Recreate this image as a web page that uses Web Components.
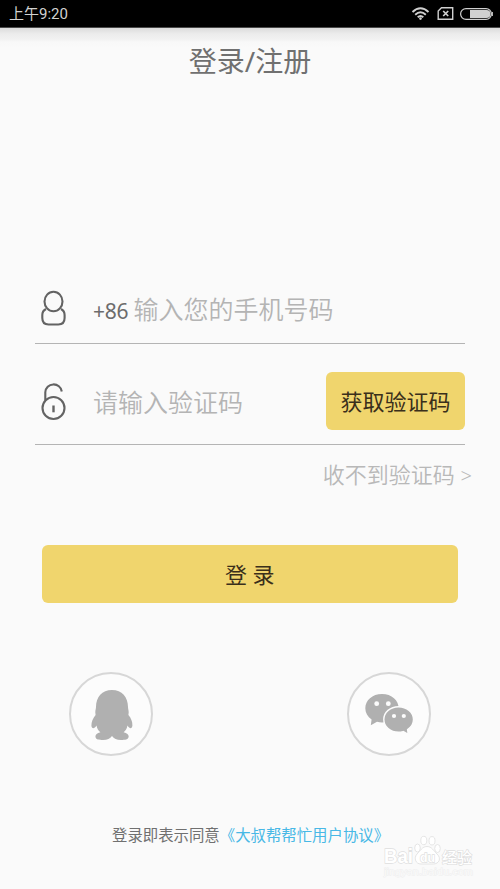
<!DOCTYPE html>
<html lang="zh-CN">
<head>
<meta charset="utf-8">
<title>登录/注册</title>
<style>
html,body{margin:0;padding:0}
body{width:500px;height:889px;overflow:hidden;background:#fafafa;font-family:"Noto Sans","Noto Sans CJK SC",sans-serif}
</style>
</head>
<body>
<login-screen></login-screen>
<script>
const define = (name, html) => customElements.define(name, class extends HTMLElement {
  constructor() {
    super();
    this.attachShadow({mode: 'open'}).innerHTML = html;
  }
});

define('status-bar', `<style>
:host{display:flex;align-items:center;height:27px;padding:0 7px 0 9px;background:#000;color:#d2d2d2;font:15px/27px Roboto,"Noto Sans CJK SC",sans-serif;border-bottom:1px solid #4a4a4a}
.time{flex:1;padding-top:1px}
svg{display:block}
</style>
<span class="time"><slot></slot></span>
<svg width="82" height="20" viewBox="411 4 82 20" fill="none" stroke="#d0d0d0">
<path d="M412.500 12Q420.500 4.500 428.500 12M415.200 14.700Q420.500 9.800 425.800 14.700M417.700 17.200Q420.500 14.700 423.300 17.200" stroke-width="1.900"/>
<circle cx="420.500" cy="18.600" r="1.300" fill="#d0d0d0" stroke="none"/>
<path d="M441.500 7.700H452.700V19.300H438.200V11Z" stroke-width="1.400"/>
<path d="M443.200 11L448.200 16M448.200 11L443.200 16" stroke-width="1.700"/>
<rect x="460.600" y="8.600" width="30.800" height="10.800" rx="5.400" stroke-width="1.200"/>
<path d="M470 10H486.500A4 4 0 0 1 486.500 18H470Z" fill="#d0d0d0" stroke="none"/>
<path d="M492.300 12V16" stroke-width="1.200"/>
</svg>`);

define('page-title', `<style>
:host{display:block;height:248px;background:linear-gradient(#dcdcdc 0,#ececec 6px,#f1f1f1 11px,#f8f8f8 14px,#fafafa 20px);color:#707070;text-align:center;font-size:28px;line-height:67px}
</style><slot></slot>`);

define('form-field', `<style>
:host{display:flex;align-items:center;box-sizing:border-box;margin:0 35px;border-bottom:1px solid #b4b4b4;font-size:25px;color:#b4b4b4;font-weight:350}
.icon{width:58px;display:flex;flex:none}
.hint{flex:1;display:flex;align-items:baseline;white-space:nowrap}
</style>
<span class="icon"><slot name="icon"></slot></span>
<span class="hint"><slot name="prefix"></slot><slot></slot></span>
<slot name="action"></slot>`);

define('user-icon', `<style>:host,svg{display:block}</style>
<svg width="38" height="42" viewBox="35 287 38 42" fill="none" stroke="#636363" stroke-width="2.100">
<ellipse cx="53.500" cy="301.500" rx="9" ry="9.700"/>
<path d="M46 309C43.500 310.300 42.300 312.400 42.300 315V318C42.300 322.300 44.500 324.500 48.500 324.500H58.300C62.300 324.500 64.600 322.300 64.600 318V315C64.600 312.400 63.500 310.300 61 309"/></svg>`);

define('lock-icon', `<style>:host,svg{display:block}</style>
<svg width="38" height="42" viewBox="35 380 38 42" fill="none" stroke="#636363" stroke-width="2.100">
<circle cx="53.500" cy="408" r="11"/>
<path d="M45.300 400.500V392.300A8.300 8.300 0 0 1 61.800 391.500"/>
<path d="M53.500 405.500V412.300" stroke-width="2.400"/></svg>`);

define('yellow-button', `<style>
:host{display:flex;align-items:center;justify-content:center;box-sizing:border-box;height:58px;border-radius:6px;background:#f0d56d;color:#3a2f1b;font-size:22px;font-weight:400;padding-bottom:2px;white-space:pre}
</style><slot></slot>`);

define('round-button', `<style>
:host{display:flex;align-items:center;justify-content:center;box-sizing:border-box;width:84px;height:84px;border:2px solid #d7d7d7;border-radius:50%;background:#fcfcfc}
</style><slot></slot>`);

define('qq-icon', `<style>:host,svg{display:block}</style>
<svg width="80" height="80" viewBox="71 674 80 80" fill="#b0b0b0">
<path d="M112 690C102 690 96 697 96 707C96 709 95.300 710 95.300 712.500L95.600 715C93 718 91.400 722 91.400 725.500C91.700 729 94.300 729 96.500 725.500C97.100 728.800 98.400 730.900 100.400 732.200C97 732.800 95.400 735 95.400 736.500C95.600 739.700 99 739.900 103 739.900C107.500 739.900 110 738.500 112 736C114 738.500 116.500 739.900 121 739.900C125 739.900 128.400 739.700 128.700 736.500C128.700 734.700 127 732.800 123.600 732.200C125.600 730.500 126.900 728.800 127.500 725.500C129.700 729 132 729 132.400 725.500C132.500 721.500 131 718 128.400 715L128.700 712.500C128.700 710 128 709 128 707C128 697 122 690 112 690Z"/></svg>`);

define('wechat-icon', `<style>:host,svg{display:block}</style>
<svg width="80" height="80" viewBox="349 674 80 80" fill="#b0b0b0">
<path d="M382 694C372.300 694 365.300 700.300 365.300 708.300C365.300 713 367.600 716.700 371.600 719.500L370.800 725.300L377 721.800C378.600 722.200 380.300 722.500 382 722.500C391.700 722.500 398.700 716.300 398.700 708.300C398.700 700.300 391.700 694 382 694Z"/>
<path d="M398.500 706.700C390.300 706.700 383.800 712.300 383.800 719.500C383.800 726.700 390.300 732.300 398.500 732.300C400.300 732.300 401.800 732 403.300 731.600L408.200 734.300L407.600 729.500C411.200 727.200 413.500 723.600 413.500 719.500C413.500 712.300 406.800 706.700 398.500 706.700Z" stroke="#fcfcfc" stroke-width="1.400"/>
<g fill="#fcfcfc"><circle cx="376.700" cy="703.700" r="2.400"/><circle cx="388.300" cy="703.700" r="2.400"/><circle cx="394" cy="716" r="2.100"/><circle cx="403.800" cy="716" r="2.100"/></g></svg>`);

define('corner-mark', `<style>
:host{position:absolute;left:380px;top:834px;width:110px;height:50px}
svg{display:block}
text{font-family:"Liberation Sans","Noto Sans CJK SC",sans-serif;fill:#fff;stroke:#dedede;stroke-width:1.300;paint-order:stroke;font-weight:bold}
.cn{font-weight:500}
.url{font-size:9px;fill:#fafafa;stroke:#eee;stroke-width:.8;font-weight:normal}
</style>
<svg width="110" height="50" viewBox="380 834 110 50">
<text x="384" y="863" font-size="20" textLength="29" lengthAdjust="spacingAndGlyphs">Bai</text>
<g fill="#fff" stroke="#dedede" stroke-width=".8">
<ellipse cx="417.500" cy="848" rx="2.800" ry="4"/><ellipse cx="423.800" cy="840.500" rx="3" ry="4.200"/><ellipse cx="432" cy="840.800" rx="3" ry="4.200"/><ellipse cx="437.500" cy="848.500" rx="2.800" ry="4"/>
<path d="M427 846.500C422 846.500 420.500 851 417 854C413.500 858 415.500 864 421 864H433C439.500 864 441.500 858 437 854C433.500 851 432 846.500 427 846.500Z"/></g>
<text x="420" y="861.500" font-size="13" textLength="15" lengthAdjust="spacingAndGlyphs">du</text>
<text class="cn" x="442" y="862.500" font-size="15" textLength="30" lengthAdjust="spacingAndGlyphs">经验</text>
<text class="url" x="384" y="875" textLength="89" lengthAdjust="spacingAndGlyphs">jingyan.baidu.com</text>
</svg>`);

define('login-screen', `<style>
:host{display:flex;flex-direction:column;position:relative;width:500px;height:889px;background:#fafafa}
.phone{height:68px;padding-bottom:3px}
.code{height:101px;padding-top:13px}
.prefix{font-size:21px;color:#6c6c6c;font-weight:400;width:40.500px;letter-spacing:-.2px}
.get{width:139px}
.help{height:60px;padding-right:28px;text-align:right;font-size:22px;line-height:59px;color:#b8b8b8;font-weight:350;white-space:pre}
.help span{font-size:20px}
.login{margin:40px 42px 0 41.500px}
.social{display:flex;justify-content:space-between;padding:0 69px;margin-top:69px}
.terms{margin:68px 0 0 112px;height:24px;line-height:23px;font-size:15.400px;color:#707070;white-space:nowrap}
.terms span{color:#48b8e6}
</style>
<status-bar>上午9:20</status-bar>
<page-title>登录/注册</page-title>
<form-field class="phone"><user-icon slot="icon"></user-icon><span slot="prefix" class="prefix">+86</span>输入您的手机号码</form-field>
<form-field class="code"><lock-icon slot="icon"></lock-icon>请输入验证码<yellow-button class="get" slot="action">获取验证码</yellow-button></form-field>
<div class="help">收不到验证码 <span>&gt;</span></div>
<yellow-button class="login">登 录</yellow-button>
<div class="social"><round-button><qq-icon></qq-icon></round-button><round-button><wechat-icon></wechat-icon></round-button></div>
<div class="terms">登录即表示同意<span>《大叔帮帮忙用户协议》</span></div>
<corner-mark></corner-mark>`);
</script>
</body>
</html>
